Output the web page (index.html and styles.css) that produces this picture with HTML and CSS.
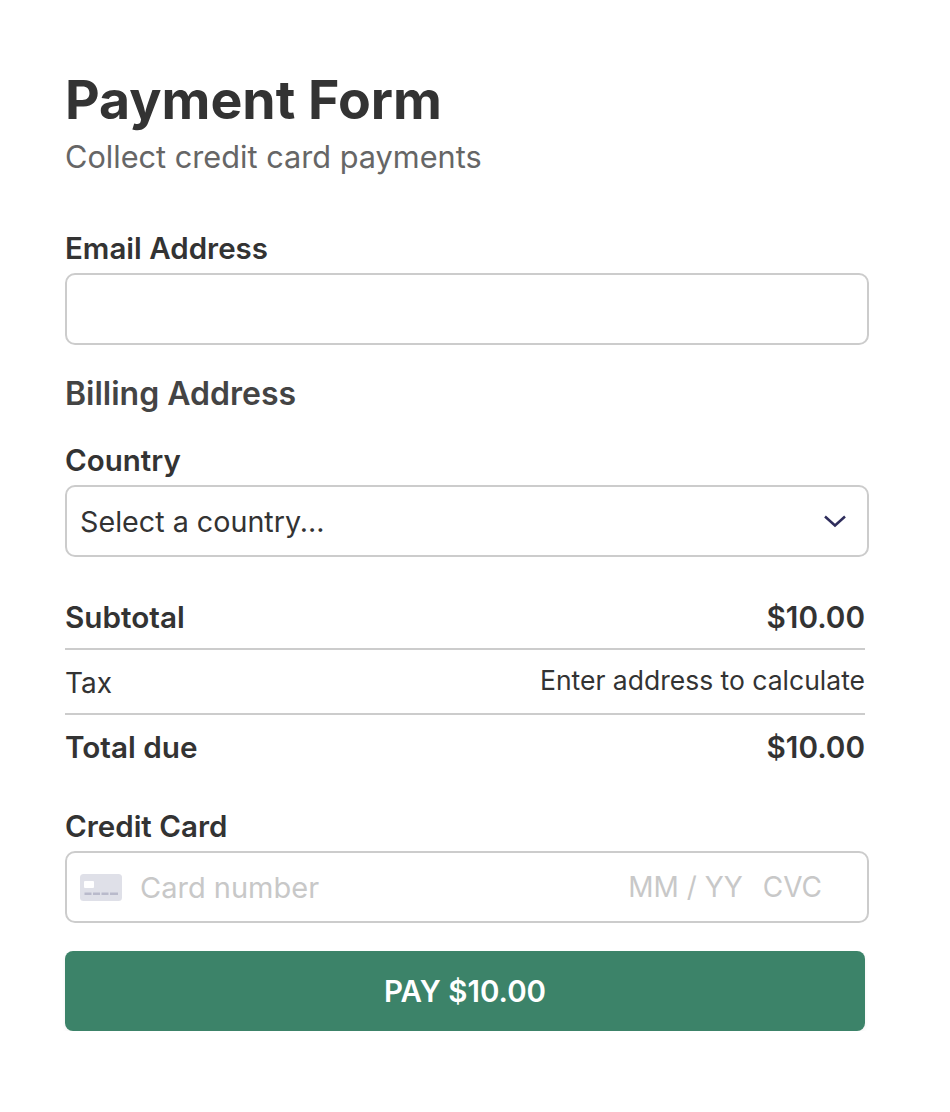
FILE: index.html
```html
<!DOCTYPE html>
<html lang="en">
<head>
<meta charset="utf-8">
<title>Payment Form</title>
<link rel="stylesheet" href="styles.css">
</head>
<body>
<main class="page">
  <h1 class="title">Payment Form</h1>
  <p class="subtitle">Collect credit card payments</p>

  <label class="label label-email" for="email">Email Address</label>
  <input class="field" id="email" type="email">

  <h2 class="section">Billing Address</h2>

  <label class="label label-country">Country</label>
  <div class="field field-select">
    <span>Select a country...</span>
    <svg class="chevron" width="22" height="13" viewBox="0 0 22 13" aria-hidden="true"><path d="M1 1.500 11 10.500 21 1.500" fill="none" stroke="#2f2d5c" stroke-width="2.500"/></svg>
  </div>

  <div class="summary">
    <div class="row row-strong row-sub"><span>Subtotal</span><span class="amount">$10.00</span></div>
    <div class="row row-tax"><span>Tax</span><span class="note">Enter address to calculate</span></div>
    <div class="row row-strong row-total"><span>Total due</span><span class="amount">$10.00</span></div>
  </div>

  <label class="label label-card">Credit Card</label>
  <div class="field field-card">
    <svg class="card-icon" width="42" height="27" viewBox="0 0 42 27" aria-hidden="true">
      <rect width="42" height="27" rx="3.500" fill="#dfe0e8"/>
      <rect x="4" y="7" width="10" height="7" rx="1" fill="#fff"/>
      <g fill="#b9bacb"><rect x="4.500" y="18.500" width="7" height="2.500"/><rect x="13" y="18.500" width="7" height="2.500"/><rect x="21.500" y="18.500" width="7" height="2.500"/><rect x="30" y="18.500" width="8" height="2.500"/></g>
    </svg>
    <span class="ph ph-number">Card number</span>
    <span class="ph ph-exp">MM / YY</span>
    <span class="ph ph-cvc">CVC</span>
  </div>

  <button class="pay" type="button">PAY $10.00</button>
</main>
</body>
</html>
```
FILE: styles.css
```css
* { box-sizing: border-box; }
html, body { margin: 0; background: #fff; }
body { font-family: Inter, "Liberation Sans", sans-serif; color: #333; }
.page { width: 800px; margin-left: 65px; padding-top: 68px; }
.title { margin: 0; font-size: 53.600px; line-height: 63px; font-weight: 700; color: #333; }
.subtitle { margin: 8px 0 0; font-size: 30.700px; line-height: 36px; color: #666; }
.label { display: block; font-size: 29.500px; line-height: 34px; font-weight: 600; color: #333; }
.label-email { margin-top: 56px; margin-bottom: 8px; }
.field { display: flex; align-items: center; width: 804px; height: 72px; border: 2px solid #ccc; border-radius: 10px; background: #fff; padding: 0 14px 0 13px; font: inherit; font-size: 28.700px; color: #333; }
.section { margin: 30px 0 0; font-size: 32px; line-height: 38px; font-weight: 600; color: #444; }
.label-country { margin-top: 30px; margin-bottom: 8px; }
.field-select { justify-content: space-between; padding-right: 21px; }
.chevron { display: block; }
.summary { margin-top: 28px; }
.row { display: flex; justify-content: space-between; align-items: center; }
.row-strong { font-size: 29.700px; font-weight: 600; color: #333; }
.row-sub { height: 65px; border-bottom: 2px solid #ccc; }
.row-tax { height: 65px; padding-top: 2px; border-bottom: 2px solid #ccc; font-size: 28px; }
.row-total { height: 63px; }
.amount { font-size: 29.700px; }
.note { font-size: 26.500px; margin-bottom: 6px; }
.label-card { margin-top: 31px; margin-bottom: 8px; }
.field-card { font-size: 29px; }
.ph { color: #c8c8c8; }
.card-icon { flex: none; }
.ph-number { margin-left: 18px; flex: 1; }
.ph-exp, .ph-cvc { font-size: 28px; }
.ph-cvc { margin-left: 20px; margin-right: 31px; }
.pay { display: block; width: 800px; height: 80px; margin-top: 28px; border: 0; border-radius: 8px; background: #3c8369; color: #fff; font: inherit; font-size: 29.500px; font-weight: 600; box-shadow: 0 2px 4px rgba(0,0,0,.06); }
```
